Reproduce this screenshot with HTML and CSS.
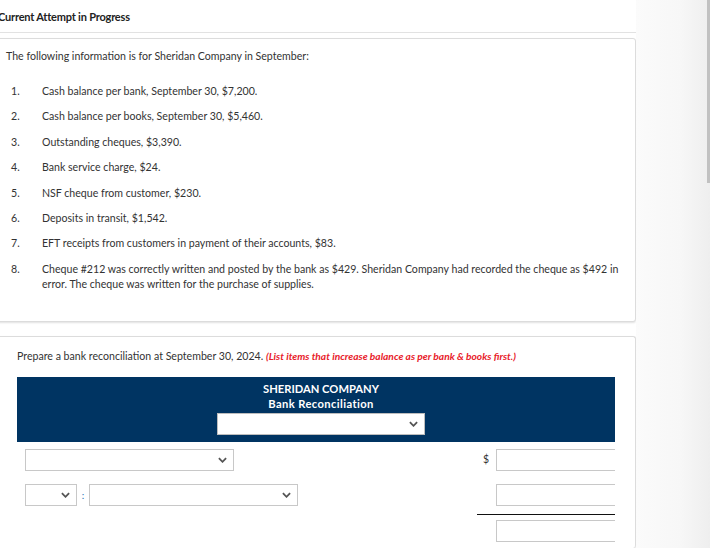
FILE: index.html
```html
<!DOCTYPE html>
<html>
<head>
<meta charset="utf-8">
<link rel="stylesheet" href="styles.css">
</head>
<body>
<div class="page">
  <div class="main">
    <div class="attempt">Current Attempt in Progress</div>
    <div class="card card-info">
      <p class="intro">The following information is for Sheridan Company in September:</p>
      <ol class="facts">
        <li><span class="num">1.</span><span>Cash balance per bank, September 30, $7,200.</span></li>
        <li><span class="num">2.</span><span>Cash balance per books, September 30, $5,460.</span></li>
        <li><span class="num">3.</span><span>Outstanding cheques, $3,390.</span></li>
        <li><span class="num">4.</span><span>Bank service charge, $24.</span></li>
        <li><span class="num">5.</span><span>NSF cheque from customer, $230.</span></li>
        <li><span class="num">6.</span><span>Deposits in transit, $1,542.</span></li>
        <li><span class="num">7.</span><span>EFT receipts from customers in payment of their accounts, $83.</span></li>
        <li><span class="num">8.</span><span>Cheque #212 was correctly written and posted by the bank as $429. Sheridan Company had recorded the cheque as $492 in error. The cheque was written for the purchase of supplies.</span></li>
      </ol>
    </div>
    <div class="card card-task">
      <p class="prompt">Prepare a bank reconciliation at September 30, 2024. <em class="hint">(List items that increase balance as per bank &amp; books first.)</em></p>
      <div class="table">
        <div class="table-inner">
          <div class="head">
            <div class="title">SHERIDAN COMPANY</div>
            <div class="title title-sub">Bank Reconciliation</div>
            <div class="sel sel-date"><svg class="chev" viewBox="0 0 10 6" width="9" height="6"><path d="M1 1 L5 5 L9 1" fill="none" stroke="#555" stroke-width="2"/></svg></div>
          </div>
          <div class="row">
            <div class="left"><div class="sel sel-wide"><svg class="chev" viewBox="0 0 10 6" width="9" height="6"><path d="M1 1 L5 5 L9 1" fill="none" stroke="#555" stroke-width="2"/></svg></div></div>
            <div class="right"><span class="dollar">$</span><div class="inp"></div></div>
          </div>
          <div class="row">
            <div class="left">
              <div class="sel sel-small"><svg class="chev" viewBox="0 0 10 6" width="9" height="6"><path d="M1 1 L5 5 L9 1" fill="none" stroke="#555" stroke-width="2"/></svg></div>
              <span class="colon">:</span>
              <div class="sel sel-wide"><svg class="chev" viewBox="0 0 10 6" width="9" height="6"><path d="M1 1 L5 5 L9 1" fill="none" stroke="#555" stroke-width="2"/></svg></div>
            </div>
            <div class="right"><span class="dollar"></span><div class="inp"></div></div>
          </div>
          <div class="row row-total">
            <div class="left"></div>
            <div class="right total"><span class="dollar"></span><div class="inp"></div></div>
          </div>
        </div>
      </div>
    </div>
  </div>
  <div class="side"><div class="thumb"></div></div>
</div>
</body>
</html>
```

FILE: styles.css
```css
html, body {
  margin: 0;
  padding: 0;
  background: #fff;
  overflow: hidden;
}
body {
  font-family: Lato, "Open Sans", sans-serif;
  color: #333;
  width: 710px;
  height: 548px;
}
.page {
  display: flex;
  height: 548px;
  overflow: hidden;
}
.main {
  width: 640px;
  margin-left: -4px;
  flex: none;
}
.side {
  flex: 1;
  position: relative;
  background: linear-gradient(to right, #fbfbfb 0%, #f7f7f7 60%, #eeeeee 100%);
}
.thumb {
  position: absolute;
  right: 0;
  top: 0;
  width: 3px;
  height: 183px;
  background: #c1c1c1;
}
.attempt {
  height: 32px;
  line-height: 34px;
  font-size: 11px;
  font-weight: 700;
  color: #222;
  padding-left: 2px;
  border-bottom: 1px solid #e2e2e2;
  letter-spacing: -0.2px;
}
.card {
  border: 1px solid #dcdcdc;
  border-radius: 3px;
  box-shadow: 0 1px 2px rgba(0,0,0,0.12);
  background: #fff;
}
.card-info {
  margin-top: 5px;
  height: 284px;
  box-sizing: border-box;
  padding: 10px 10px 0 9px;
}
.intro {
  margin: 0;
  font-size: 10.6px;
  line-height: 14px;
  color: #333;
}
.facts {
  list-style: none;
  margin: 21px 0 0 0;
  padding: 0;
  font-size: 10.6px;
  color: #333;
}
.facts li {
  display: flex;
  line-height: 15px;
  margin-bottom: 10.4px;
}
.num {
  flex: none;
  padding-left: 5px;
  box-sizing: border-box;
  width: 36px;
}
.card-task {
  margin-top: 14px;
  height: 212px;
  padding: 12px 20px 0 20px;
  box-sizing: border-box;
  border-bottom: none;
}
.prompt {
  margin: 0;
  font-size: 10.6px;
  line-height: 14px;
  color: #333;
}
.hint {
  color: #e8202a;
  font-weight: 700;
  font-style: italic;
  font-size: 10.2px;
}
.table {
  margin-top: 14px;
  width: 598px;
  overflow: hidden;
}
.table-inner {
  width: 608px;
}
.head {
  background: #003462;
  height: 65px;
  box-sizing: border-box;
  padding-top: 5px;
  display: flex;
  flex-direction: column;
  align-items: center;
}
.title {
  color: #fff;
  font-weight: 700;
  font-size: 11.2px;
  line-height: 14.5px;
}
.title-sub {
  letter-spacing: 0.4px;
}
.sel {
  box-sizing: border-box;
  height: 22px;
  background: #fff;
  border: 1px solid #c8c8c8;
  display: flex;
  align-items: center;
  justify-content: flex-end;
  padding-right: 6px;
}
.sel-date {
  margin-top: 2px;
  width: 208px;
  border-color: #bdbdbd;
}
.chev {
  display: block;
}
.row {
  display: flex;
  justify-content: space-between;
  margin-top: 7px;
  height: 22px;
  width: 598px;
}
.row + .row {
  margin-top: 13px;
}
.left {
  display: flex;
  align-items: center;
  padding-left: 8px;
}
.sel-wide {
  width: 209px;
}
.sel-small {
  width: 52px;
}
.colon {
  color: #1f6fb5;
  font-size: 10px;
  width: 12px;
  text-align: center;
}
.right {
  display: flex;
  align-items: flex-start;
  width: 138px;
  flex: none;
}
.dollar {
  width: 19px;
  font-size: 10.5px;
  color: #333;
  text-align: left;
  padding-left: 6px;
  box-sizing: border-box;
  line-height: 20px;
}
.inp {
  flex: 1;
  height: 22px;
  box-sizing: border-box;
  border: 1px solid #c8c8c8;
  border-right: none;
  background: #fff;
  margin-right: -2px;
}
.row.row-total {
  margin-top: 14px;
  height: 29px;
}
.total {
  border-top: 1.5px solid #111;
  margin-top: -6px;
  padding-top: 5px;
}
```
